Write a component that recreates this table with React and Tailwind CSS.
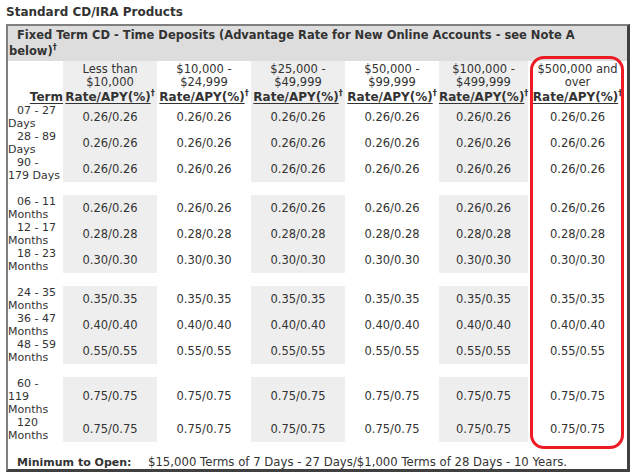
import React from "react";

const tiers = [
  { label: ["Less than", "$10,000"] },
  { label: ["$10,000 -", "$24,999"] },
  { label: ["$25,000 -", "$49,999"] },
  { label: ["$50,000 -", "$99,999"] },
  { label: ["$100,000 -", "$499,999"] },
  { label: ["$500,000 and", "over"] },
];

const groups = [
  [
    { term: ["07 - 27", "Days"], rate: "0.26/0.26" },
    { term: ["28 - 89", "Days"], rate: "0.26/0.26" },
    { term: ["90 -", "179 Days"], rate: "0.26/0.26" },
  ],
  [
    { term: ["06 - 11", "Months"], rate: "0.26/0.26" },
    { term: ["12 - 17", "Months"], rate: "0.28/0.28" },
    { term: ["18 - 23", "Months"], rate: "0.30/0.30" },
  ],
  [
    { term: ["24 - 35", "Months"], rate: "0.35/0.35" },
    { term: ["36 - 47", "Months"], rate: "0.40/0.40" },
    { term: ["48 - 59", "Months"], rate: "0.55/0.55" },
  ],
  [
    { term: ["60 -", "119", "Months"], rate: "0.75/0.75", tall: true },
    { term: ["120", "Months"], rate: "0.75/0.75" },
  ],
];

// shaded columns alternate, starting with the first tier
const shade = (i) => (i % 2 === 0 ? "bg-[#eeeeee]" : "bg-white");

function Lines({ lines }) {
  return lines.map((l, i) => (
    <React.Fragment key={i}>
      {i > 0 && <br />}
      {l}
    </React.Fragment>
  ));
}

function Dagger() {
  return <span className="relative -top-[5px] text-[8px] leading-none font-bold">†</span>;
}

function RateRow({ row }) {
  return (
    <tr className={row.tall ? "h-[39px]" : "h-[26px]"}>
      <td className="align-middle text-left indent-[9px] text-[11px] leading-[13px]">
        <Lines lines={row.term} />
      </td>
      {tiers.map((t, i) => (
        <td key={i} className={`${shade(i)} text-center align-middle leading-[13px]`}>
          {row.rate}
        </td>
      ))}
    </tr>
  );
}

function Spacer() {
  return (
    <tr className="h-[13px]">
      <td colSpan={7}></td>
    </tr>
  );
}

export default function App() {
  return (
    <div className="relative w-[634px] h-[473px] bg-white text-[#333333] font-['DejaVu_Sans',Verdana,sans-serif] text-[11.5px] overflow-hidden">
      {/* page title */}
      <div className="pl-[6px] pt-[4px] h-[24px] text-[12px] leading-[16px] font-bold">
        Standard CD/IRA Products
      </div>

      <div className="ml-[6px] w-[624px] border-l-2 border-t-2 border-r-[3px] border-b-[3px] border-l-[#7f7f7f] border-t-[#7f7f7f] border-r-[#404040] border-b-[#404040]">
        <table className="w-[619px] table-fixed">
          <colgroup>
            <col className="w-[55px]" />
            <col className="w-[94px]" />
            <col className="w-[94px]" />
            <col className="w-[94px]" />
            <col className="w-[94px]" />
            <col className="w-[89px]" />
            <col className="w-[99px]" />
          </colgroup>
          <tbody>
            <tr className="h-[35px]">
              <td colSpan={7} className="bg-[#dddddd] align-top pt-[1px] pl-[1px] indent-[8px] text-[11.5px] leading-[16px] font-bold">
                Fixed Term CD - Time Deposits (Advantage Rate for New Online Accounts - see Note A
                <br />
                below)
                <Dagger />
              </td>
            </tr>

            <tr className="h-[43px]">
              <td className="align-bottom text-right leading-[14px]">
                <span className="text-[12px] font-bold underline underline-offset-2">Term</span>
              </td>
              {tiers.map((t, i) => (
                <td key={i} className={`${shade(i)} text-center align-top pt-[2px] whitespace-nowrap`}>
                  <div className="leading-[13px]">
                    <Lines lines={t.label} />
                  </div>
                  <div className="pt-[1px] leading-[14px] text-[12px] font-bold">
                    <span className="underline underline-offset-2">Rate/APY(%)</span>
                    <Dagger />
                  </div>
                </td>
              ))}
            </tr>

            {groups.map((g, gi) => (
              <React.Fragment key={gi}>
                {gi > 0 && <Spacer />}
                {g.map((row, ri) => (
                  <RateRow key={ri} row={row} />
                ))}
              </React.Fragment>
            ))}

            <Spacer />
            <tr className="h-[14px]">
              <td colSpan={7} className="leading-[13px]">
                <div className="flex">
                  <span className="w-[140px] pl-[9px] text-[11px] font-bold">Minimum to Open:</span>
                  <span className="text-[11.7px]">$15,000 Terms of 7 Days - 27 Days/$1,000 Terms of 28 Days - 10 Years.</span>
                </div>
              </td>
            </tr>
          </tbody>
        </table>
      </div>

      {/* red highlight drawn over the top tier column */}
      <div className="absolute left-[530px] top-[56px] w-[94px] h-[393px] border-[3px] border-[#ed1c24] rounded-[14px] pointer-events-none"></div>
    </div>
  );
}
